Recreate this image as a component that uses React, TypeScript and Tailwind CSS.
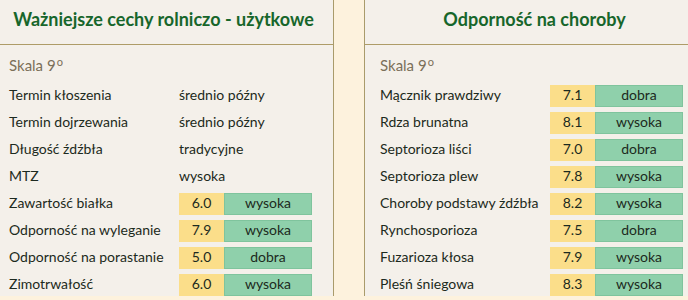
import React from 'react';

type Row = { label: string; text?: string; score?: string; grade?: string };

const cechy: Row[] = [
  { label: 'Termin kłoszenia', text: 'średnio późny' },
  { label: 'Termin dojrzewania', text: 'średnio późny' },
  { label: 'Długość źdźbła', text: 'tradycyjne' },
  { label: 'MTZ', text: 'wysoka' },
  { label: 'Zawartość białka', score: '6.0', grade: 'wysoka' },
  { label: 'Odporność na wyleganie', score: '7.9', grade: 'wysoka' },
  { label: 'Odporność na porastanie', score: '5.0', grade: 'dobra' },
  { label: 'Zimotrwałość', score: '6.0', grade: 'wysoka' },
];

const choroby: Row[] = [
  { label: 'Mącznik prawdziwy', score: '7.1', grade: 'dobra' },
  { label: 'Rdza brunatna', score: '8.1', grade: 'wysoka' },
  { label: 'Septorioza liści', score: '7.0', grade: 'dobra' },
  { label: 'Septorioza plew', score: '7.8', grade: 'wysoka' },
  { label: 'Choroby podstawy źdźbła', score: '8.2', grade: 'wysoka' },
  { label: 'Rynchosporioza', score: '7.5', grade: 'dobra' },
  { label: 'Fuzarioza kłosa', score: '7.9', grade: 'wysoka' },
  { label: 'Pleśń śniegowa', score: '8.3', grade: 'wysoka' },
];

function Panel({ title, rows }: { title: string; rows: Row[] }) {
  return (
    <div className="w-[341px] shrink-0 bg-[#f4f0ea] border-x border-[#a99b6b]">
      {/* nagłówek */}
      <div className="pt-[8px] pb-[14px] border-b border-[#ae9c68] text-center">
        <h2 className="text-[18px] leading-[22px] font-bold text-[#17662b]">{title}</h2>
      </div>

      <div className="pt-[11px] pl-[15px]">
        <p className="text-[15px] leading-[18px] text-[#7b6f59]">
          Skala 9<span className="text-[11px] align-top relative -top-[3px] ml-[1px]">o</span>
        </p>

        <div className="mt-[11px] flex flex-col gap-[5px]">
          {rows.map((row) => (
            <div key={row.label} className="flex h-[22px] text-[14px] leading-[19px] text-[#1c2a20]">
              <span className="w-[170px] shrink-0 whitespace-nowrap">{row.label}</span>
              {row.text ? (
                <span className="whitespace-nowrap">{row.text}</span>
              ) : (
                <>
                  <span className="w-[45px] bg-[#fbde8a] text-center">{row.score}</span>
                  <span className="w-[88px] bg-[#8fd0ab] border border-[#7fc49d] text-center leading-[17px]">
                    {row.grade}
                  </span>
                </>
              )}
            </div>
          ))}
        </div>
      </div>
    </div>
  );
}

export default function App() {
  return (
    <div
      className="h-[300px] overflow-hidden bg-[#fdf2dd]"
      style={{ fontFamily: 'Lato, "Noto Sans", sans-serif' }}
    >
      <div className="flex gap-[30px] -ml-[7px]">
        <Panel title="Ważniejsze cechy rolniczo - użytkowe" rows={cechy} />
        <Panel title="Odporność na choroby" rows={choroby} />
      </div>
    </div>
  );
}
